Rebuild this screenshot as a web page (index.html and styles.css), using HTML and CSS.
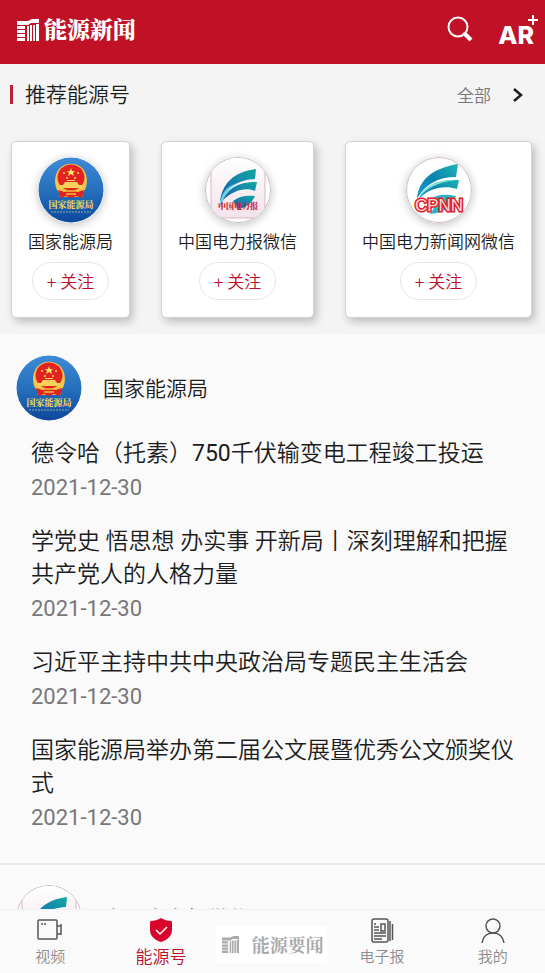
FILE: index.html
```html
<!DOCTYPE html>
<html lang="zh-CN">
<head>
<meta charset="utf-8">
<meta name="viewport" content="width=device-width, initial-scale=1">
<title>能源新闻</title>
<link rel="stylesheet" href="styles.css">
</head>
<body>
<svg class="defs" aria-hidden="true">
  <defs>
    <linearGradient id="blue" x1="0" y1="0" x2="0" y2="1"><stop offset="0" stop-color="#3f8bd6"/><stop offset=".55" stop-color="#236dbb"/><stop offset="1" stop-color="#0c479c"/></linearGradient>
    <linearGradient id="wave" x1="0" y1="1" x2="1" y2="0"><stop offset="0" stop-color="#1c4fa0"/><stop offset=".45" stop-color="#147fae"/><stop offset="1" stop-color="#12a79f"/></linearGradient>
    <linearGradient id="aqua" x1="0" y1="1" x2="1" y2="0"><stop offset="0" stop-color="#1a9bd0"/><stop offset=".5" stop-color="#0b83ae"/><stop offset="1" stop-color="#20b5b4"/></linearGradient>
    <linearGradient id="paper" x1="0" y1="0" x2="0" y2="1"><stop offset="0" stop-color="#fff"/><stop offset="1" stop-color="#f3e2ea"/></linearGradient>
    <clipPath id="disc"><circle cx="33" cy="33" r="32"/></clipPath>
  </defs>
  <symbol id="nea" viewBox="0 0 66 66">
    <circle cx="33" cy="33" r="32.500" fill="url(#blue)"/>
    <path d="M23 37C16 33 15 19 21 12c6-7 18-7 24 0 6 7 5 21-2 25l2 3H21z" fill="#f4c64a"/>
    <ellipse cx="33" cy="20.500" rx="13.500" ry="13" fill="#e32321"/>
    <path d="M33 11l1 3h3l-2 2 1 3-3-2-3 2 1-3-2-2h3z" fill="#ffe36a"/>
    <g fill="#ffd84f"><circle cx="26" cy="16" r="1"/><circle cx="40" cy="16" r="1"/><circle cx="29" cy="21" r="1"/><circle cx="37" cy="21" r="1"/></g>
    <path d="M27 25h12l2 3h3v3H22v-3h3zM29 23h8v1h-8z" fill="#f7d25a"/>
    <path d="M20 33l7 2c2-4 10-4 12 0l7-2-2 8-6-2-5 2-5-2-6 2z" fill="#dc2420"/>
    <path d="M25 34h16M28 37h10" stroke="#f5bd3b" stroke-width="1.500"/>
  </symbol>
  <symbol id="cepn" viewBox="0 0 66 66">
    <circle cx="33" cy="33" r="32.500" fill="#fff" stroke="#c4b6bb"/>
    <g clip-path="url(#disc)"><path d="M6 0h54v61H6z" fill="url(#paper)" stroke="#d3b7c3"/></g>
    <path d="M15 45C17 27 28 15 51 12l-1 10C34 23 23 29 15 45z" fill="url(#wave)"/>
    <path d="M17 44C24 30 34 25 52 25l-2 9c-9-4-22-1-33 10z" fill="url(#wave)"/>
    <path d="M15 48C16 37 20 30 32 26 23 32 19 38 17 49z" fill="#62d3e4"/>
    <path d="M28 44c6-5 13-6 22-5-3 7-9 12-17 13z" fill="url(#wave)"/>
  </symbol>
  <symbol id="cpnn" viewBox="0 0 66 66">
    <circle cx="33" cy="33" r="32.500" fill="#fff" stroke="#cdb6bd"/>
    <path d="M11 42C12 24 26 11 52 7l-2 13C32 20 19 27 11 42z" fill="url(#aqua)"/>
    <path d="M12 43c7-15 20-21 41-20l-2 9c-13-4-29-1-39 11z" fill="url(#aqua)"/>
    <path d="M13 40c8-13 18-17 36-17-18 3-26 7-36 17z" fill="#83e2df"/>
    <path d="M26 41c7-4 14-4 24-2-2 9-11 17-26 18l6-9z" fill="#2eb2cb"/>
  </symbol>
  <symbol id="mark" viewBox="0 0 22 23">
    <path d="M0 3h11l4-2h7v4h-8l-3 2H0zM0 8h8v3H0zM0 12h8v3H0zM0 16h8v3H0zM0 20h8v3H0zM10 8h2v15h-2zM13 7h2v16h-2zM16 7h2v16h-2zM19 6h3v17h-3z" fill="currentColor"/>
  </symbol>
</svg>

<div class="app">
  <header class="topbar">
    <h1 class="brand"><svg class="brand-mark"><use href="#mark"/></svg><span>能源新闻</span></h1>
    <button class="icon-btn" type="button" aria-label="搜索">
      <svg width="26" height="26" viewBox="0 0 26 26" fill="none" stroke="#fff"><circle cx="11" cy="11" r="9.500" stroke-width="2"/><path d="M18 18l6 6" stroke-width="4"/><path d="M16 17l3 3" stroke-width="2"/></svg>
    </button>
    <button class="icon-btn ar" type="button"><span>AR</span>
      <svg class="ar-plus" width="10" height="10" viewBox="0 0 10 10" stroke="#fff" stroke-width="2"><path d="M5 0v10M0 5h10"/></svg>
    </button>
  </header>

  <main class="content">
    <section class="recommend">
      <div class="section-head">
        <h2>推荐能源号</h2>
        <a href="#all" class="all">全部
          <svg width="10" height="16" viewBox="0 0 10 16" fill="none" stroke="#1b1b1b" stroke-width="2.500"><path d="M1 2l7 6-7 6"/></svg>
        </a>
      </div>
      <div class="cards">
        <article class="card">
          <svg class="avatar raised" viewBox="0 0 66 66"><use href="#nea"/><text x="33" y="51" class="seal-name">国家能源局</text><path class="seal-line" d="M13 55h40"/></svg>
          <h3>国家能源局</h3><button type="button" class="follow">+ 关注</button>
        </article>
        <article class="card">
          <svg class="avatar raised" viewBox="0 0 66 66"><use href="#cepn"/><text x="33" y="52" class="paper-name">中国电力报</text></svg>
          <h3>中国电力报微信</h3><button type="button" class="follow">+ 关注</button>
        </article>
        <article class="card">
          <svg class="avatar raised" viewBox="0 0 66 66"><use href="#cpnn"/><text x="33" y="54" class="cpnn-name">CPNN</text></svg>
          <h3>中国电力新闻网微信</h3><button type="button" class="follow">+ 关注</button>
        </article>
      </div>
    </section>

    <section class="feed">
      <header class="feed-head">
        <svg class="avatar" viewBox="0 0 66 66"><use href="#nea"/><text x="33" y="51" class="seal-name">国家能源局</text><path class="seal-line" d="M13 55h40"/></svg>
        <h2>国家能源局</h2>
      </header>
      <ul class="news">
        <li><a href="#n1">德令哈（托素）<span class="num">750</span>千伏输变电工程竣工投运</a><time>2021-12-30</time></li>
        <li><a href="#n2">学党史 悟思想 办实事 开新局丨深刻理解和把握共产党人的人格力量</a><time>2021-12-30</time></li>
        <li><a href="#n3">习近平主持中共中央政治局专题民主生活会</a><time>2021-12-30</time></li>
        <li><a href="#n4">国家能源局举办第二届公文展暨优秀公文颁奖仪式</a><time>2021-12-30</time></li>
      </ul>
    </section>
    <section class="feed">
      <header class="feed-head"><svg class="avatar" viewBox="0 0 66 66"><use href="#cepn"/></svg><h2>中国电力报微信</h2></header>
    </section>
  </main>

  <nav class="tabbar">
    <a href="#video">
      <svg width="26" height="24" viewBox="0 0 26 24" fill="none" stroke="#555" stroke-width="1.500"><rect x="1" y="2" width="19" height="19" rx="1"/><path d="M20 8h4v8h-4M24 6v11M4 6h2M7 6h2"/></svg>
      <span>视频</span></a>
    <a href="#accounts" class="active" aria-current="page">
      <svg width="22" height="24" viewBox="0 0 22 24"><path d="M11 0c3 2 7 3 10 3 1 0 1 1 1 2v7c0 6-5 10-11 12C5 22 0 18 0 12V5c0-1 0-2 1-2 3 0 7-1 10-3z" fill="#d9042b"/><path d="M6 12l4 4 7-7" fill="none" stroke="#fff" stroke-width="1.500"/></svg>
      <span>能源号</span></a>
    <a href="#headlines" class="headline"><svg class="headline-mark" viewBox="0 0 22 23"><use href="#mark"/></svg><span>能源要闻</span></a>
    <a href="#paper">
      <svg width="24" height="26" viewBox="0 0 24 26" fill="none" stroke="#555" stroke-width="1.500"><rect x="2" y="1" width="16" height="23" rx="2"/><path d="M4 6h2M4 9h5M4 12h5M4 15h12M4 18h12M4 21h8M11 6h4v7h-4zM20 3v20M22.500 6v16"/></svg>
      <span>电子报</span></a>
    <a href="#me">
      <svg width="26" height="26" viewBox="0 0 26 26" fill="none" stroke="#555" stroke-width="1.500"><circle cx="13" cy="8" r="7"/><path d="M2 25c1-6 5-10 11-10s10 4 11 10"/></svg>
      <span>我的</span></a>
  </nav>
</div>
</body>
</html>
```
FILE: styles.css
```css
* { box-sizing: border-box; }

body {
  margin: 0;
  color: #1c1c1c;
  background: #fafafa;
  font-family: Roboto, "Noto Sans CJK SC", sans-serif;
  font-weight: 350;
}

h1, h2, h3, ul { margin: 0; padding: 0; font-weight: inherit; }
a { color: inherit; text-decoration: none; }
button { font-family: inherit; font-weight: inherit; cursor: pointer; }
svg { display: block; flex: none; }

.defs { position: absolute; width: 0; height: 0; }

.app { display: flex; flex-direction: column; height: 100vh; overflow: hidden; }

.topbar {
  display: flex;
  align-items: center;
  gap: 25px;
  flex: none;
  height: 64px;
  padding: 0 7px 6px 17px;
  color: #fff;
  background: #c01126;
}

.brand {
  display: flex;
  align-items: center;
  gap: 5px;
  flex: 1;
  font-family: "Noto Serif CJK SC", "Noto Sans CJK SC", serif;
  font-size: 23px;
  font-weight: 900;
  line-height: 32px;
}
.brand-mark { width: 22px; height: 23px; }

.icon-btn { padding: 0; border: 0; color: inherit; background: none; }
.ar {
  position: relative;
  padding: 12px 4px 0 0;
  font-family: Inter, "Liberation Sans", sans-serif;
  font-size: 25px;
  font-weight: 800;
  line-height: 28px;
}
.ar-plus { position: absolute; top: 6px; right: 0; }

.content { flex: 1; min-height: 0; overflow: hidden; }

.recommend { background: #f4f4f4; }

.section-head {
  display: flex;
  align-items: center;
  justify-content: space-between;
  height: 61px;
  padding: 0 22px 0 10px;
}
.section-head h2 {
  display: flex;
  align-items: center;
  gap: 12px;
  font-size: 21px;
  line-height: 30px;
}
.section-head h2::before { content: ""; width: 3px; height: 19px; background: #c01f3b; }
.all { display: flex; align-items: center; gap: 22px; color: #777; font-size: 17px; }

.cards { display: flex; gap: 31px; padding: 16px 11px; overflow: hidden; }

.card {
  display: flex;
  flex: none;
  flex-direction: column;
  align-items: center;
  padding: 15px 16px 17px;
  border: 1px solid #d2d2d2;
  border-radius: 5px;
  background: #fff;
  box-shadow: 3px 4px 8px rgba(0, 0, 0, .22);
}
.card h3 { font-size: 17px; line-height: 39px; white-space: nowrap; }

.avatar { width: 66px; height: 66px; border-radius: 50%; }
.raised { box-shadow: 0 2px 10px rgba(0, 0, 0, .25); }

.follow {
  width: 77px;
  height: 38px;
  padding: 0 0 2px;
  border: 1px solid #e6e6e6;
  border-radius: 19px;
  color: #b90f2b;
  background: #fff;
  font-size: 17px;
}

.feed { padding: 21px 16px 27px; }
.feed + .feed { padding-top: 20px; border-top: 2px solid #e9e9e9; }
.feed-head { display: flex; align-items: center; gap: 21px; }
.feed-head h2 { padding-top: 2px; font-size: 21px; line-height: 30px; }

.news {
  display: flex;
  flex-direction: column;
  gap: 19px;
  padding: 16px 14px 0 15px;
  list-style: none;
  font-size: 23px;
}
.news a { display: block; line-height: 33px; }
.news time { display: block; color: #777; line-height: 36px; font-size: 22px; font-weight: 400; }
.num { font-weight: 400; }

.tabbar {
  display: grid;
  grid-template-columns: repeat(5, 1fr);
  flex: none;
  height: 64px;
  margin: 0 -3px 0 -5px;
  border-top: 1px solid #f1f1f1;
  background: #fafafa;
}
.tabbar a {
  display: flex;
  flex-direction: column;
  align-items: center;
  justify-content: space-between;
  padding: 8px 0 5px;
  color: #8c8c8c;
  font-size: 15px;
  line-height: 22px;
}
.tabbar .active { color: #b90f2b; font-size: 17px; }
.tabbar .headline {
  flex-direction: row;
  justify-content: space-between;
  align-self: center;
  height: 37px;
  margin-top: 5px;
  padding: 0 3px 0 6px;
  color: #aaa;
  background: #fff;
  font-family: "Noto Serif CJK SC", "Noto Sans CJK SC", serif;
  font-size: 18px;
  font-weight: 700;
}
.headline-mark { width: 17px; height: 18px; }

.seal-name { fill: #ffe04d; font: 700 9px "Noto Serif CJK SC", "Noto Sans CJK SC", serif; text-anchor: middle; }
.seal-line { fill: none; stroke: #8fae9c; stroke-width: 1; stroke-dasharray: 2 1; }
.paper-name { fill: #cf2338; font: 900 8px "Noto Serif CJK SC", "Noto Sans CJK SC", serif; text-anchor: middle; }
.cpnn-name { fill: #ffd5d5; stroke: #dc2027; stroke-width: 3; paint-order: stroke; font: 400 17px "Liberation Sans", sans-serif; text-anchor: middle; }
```
